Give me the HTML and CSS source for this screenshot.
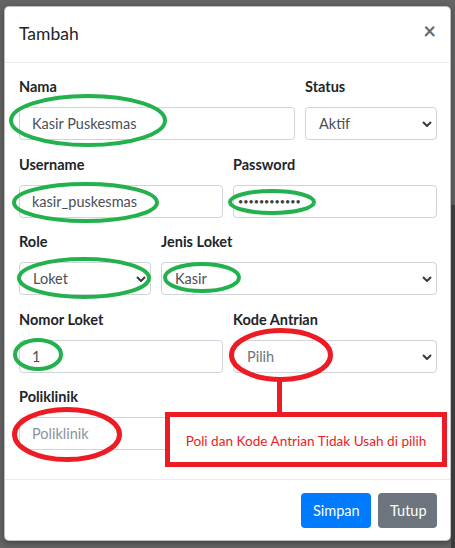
FILE: index.html
```html
<!DOCTYPE html>
<html lang="id">
<head>
<meta charset="utf-8">
<title>Tambah</title>
<link rel="stylesheet" href="styles.css">
</head>
<body>
<div class="backdrop-strip"></div>
<div class="modal">
  <div class="modal-header">
    <h4 class="modal-title">Tambah</h4>
    <span class="close">&times;</span>
  </div>
  <form class="modal-body">
    <div class="row row-8-4">
      <div class="group">
        <label class="lbl">Nama</label>
        <input class="ctl" type="text" value="Kasir Puskesmas">
      </div>
      <div class="group">
        <label class="lbl">Status</label>
        <div class="sel-wrap">
          <select class="ctl sel"><option>Aktif</option></select>
          <svg class="chev" viewBox="0 0 10 6" width="10" height="6"><path d="M1 1 L5 5 L9 1" fill="none" stroke="#343a40" stroke-width="2"/></svg>
        </div>
      </div>
    </div>
    <div class="row row-6-6">
      <div class="group">
        <label class="lbl">Username</label>
        <input class="ctl" type="text" value="kasir_puskesmas">
      </div>
      <div class="group">
        <label class="lbl">Password</label>
        <input class="ctl pw" type="text" value="••••••••••••">
      </div>
    </div>
    <div class="row row-4-8">
      <div class="group">
        <label class="lbl">Role</label>
        <div class="sel-wrap">
          <select class="ctl sel"><option>Loket</option></select>
          <svg class="chev" viewBox="0 0 10 6" width="10" height="6"><path d="M1 1 L5 5 L9 1" fill="none" stroke="#343a40" stroke-width="2"/></svg>
        </div>
      </div>
      <div class="group">
        <label class="lbl">Jenis Loket</label>
        <div class="sel-wrap">
          <select class="ctl sel"><option>Kasir</option></select>
          <svg class="chev" viewBox="0 0 10 6" width="10" height="6"><path d="M1 1 L5 5 L9 1" fill="none" stroke="#343a40" stroke-width="2"/></svg>
        </div>
      </div>
    </div>
    <div class="row row-6-6">
      <div class="group">
        <label class="lbl">Nomor Loket</label>
        <input class="ctl" type="text" value="1">
      </div>
      <div class="group">
        <label class="lbl">Kode Antrian</label>
        <div class="sel-wrap">
          <select class="ctl sel muted"><option>Pilih</option></select>
          <svg class="chev" viewBox="0 0 10 6" width="10" height="6"><path d="M1 1 L5 5 L9 1" fill="none" stroke="#343a40" stroke-width="2"/></svg>
        </div>
      </div>
    </div>
    <div class="row row-6-6">
      <div class="group">
        <label class="lbl">Poliklinik</label>
        <input class="ctl" type="text" placeholder="Poliklinik">
      </div>
    </div>
  </form>
  <div class="modal-footer">
    <button class="btn btn-primary" type="button">Simpan</button>
    <button class="btn btn-secondary" type="button">Tutup</button>
  </div>
</div>

<svg class="marks" width="455" height="548" viewBox="0 0 455 548">
  <g fill="none" stroke="#22b14c" stroke-width="4">
    <ellipse cx="88" cy="120.5" rx="77" ry="24.5"/>
    <ellipse cx="85.5" cy="202.5" rx="71.5" ry="18.5"/>
    <ellipse cx="272" cy="202" rx="42" ry="11"/>
    <ellipse cx="84" cy="278" rx="65" ry="19"/>
    <ellipse cx="202" cy="277.5" rx="37" ry="13.5"/>
    <ellipse cx="38" cy="354.5" rx="23" ry="14.5"/>
  </g>
  <g fill="none" stroke="#ed1c24" stroke-width="5">
    <ellipse cx="281" cy="355" rx="49.5" ry="24.5"/>
    <ellipse cx="67" cy="434.5" rx="52.5" ry="25"/>
    <line x1="279.5" y1="379" x2="279.5" y2="413"/>
  </g>
</svg>
<div class="note">Poli dan Kode Antrian Tidak Usah di pilih</div>
</body>
</html>
```
FILE: styles.css
```css
* { box-sizing: border-box; }
html, body { margin: 0; padding: 0; }
body {
  width: 455px;
  height: 548px;
  background: #646464;
  font-family: Lato, "Liberation Sans", sans-serif;
  position: relative;
  overflow: hidden;
  padding: 6px 4px 0 4px;
}
.backdrop-strip {
  position: absolute;
  right: 0;
  top: 205px;
  width: 4px;
  height: 343px;
  background: #3c3c3c;
}
.modal {
  width: 447px;
  height: 535px;
  background: #fff;
  border: 1px solid rgba(0,0,0,.25);
  border-radius: 5px;
  display: flex;
  flex-direction: column;
  box-shadow: 0 2px 6px rgba(0,0,0,.35);
}
.modal-header {
  height: 56px;
  border-bottom: 1px solid #e9ecef;
  display: flex;
  align-items: center;
  justify-content: space-between;
  padding: 0 14px 2px 14px;
}
.modal-title {
  margin: 0;
  font-size: 17.5px;
  font-weight: 400;
  color: #212529;
}
.close {
  font-size: 22px;
  font-weight: 700;
  color: #6a6a6a;
  line-height: 1;
  margin-bottom: 6px;
  margin-right: 0px;
}
.modal-body {
  flex: 1;
  padding: 12px 13px 0 14px;
  display: flex;
  flex-direction: column;
  gap: 12.5px;
  margin: 0;
}
.row {
  display: grid;
  column-gap: 10px;
}
.row-8-4 { grid-template-columns: 276px 132px; }
.row-6-6 { grid-template-columns: 204px 204px; }
.row-4-8 { grid-template-columns: 132px 276px; }
.group {
  display: flex;
  flex-direction: column;
}
.lbl {
  font-size: 14.5px;
  font-weight: 700;
  color: #212529;
  line-height: 24px;
  height: 24px;
  margin-bottom: 8px;
}
.ctl {
  width: 100%;
  height: 33px;
  border: 1px solid #ced4da;
  border-radius: 4px;
  background: #fff;
  font-family: Lato, "Liberation Sans", sans-serif;
  font-size: 14.5px;
  color: #495057;
  padding: 0 12px;
  margin: 0;
  outline: none;
}
.ctl::placeholder { color: #8c939a; opacity: 1; }
.pw { font-size: 9px; letter-spacing: 0; padding-left: 4px; color: #3a3f44; }
.sel-wrap { position: relative; }
.sel {
  appearance: none;
  -webkit-appearance: none;
  padding-left: 13px;
}
.muted { color: #6c757d; }
.chev {
  position: absolute;
  right: 5px;
  top: 14px;
  pointer-events: none;
}
.modal-footer {
  height: 61px;
  border-top: 1px solid #e9ecef;
  display: flex;
  justify-content: flex-end;
  align-items: flex-start;
  gap: 7px;
  padding: 13px 13px 0 0;
}
.btn {
  height: 35px;
  border: none;
  border-radius: 4px;
  color: #fff;
  font-family: Lato, "Liberation Sans", sans-serif;
  font-size: 14.5px;
  padding: 0 12px;
}
.btn-primary { background: #007bff; width: 70px; }
.btn-secondary { background: #6c757d; width: 59px; }
.marks {
  position: absolute;
  left: 0;
  top: 0;
  pointer-events: none;
}
.note {
  position: absolute;
  left: 165px;
  top: 412px;
  width: 282px;
  height: 55px;
  border: 5px solid #ed1c24;
  background: #fff;
  color: #ed1c24;
  font-size: 13.6px;
  display: flex;
  align-items: center;
  justify-content: center;
  padding-top: 2px;
}
```
